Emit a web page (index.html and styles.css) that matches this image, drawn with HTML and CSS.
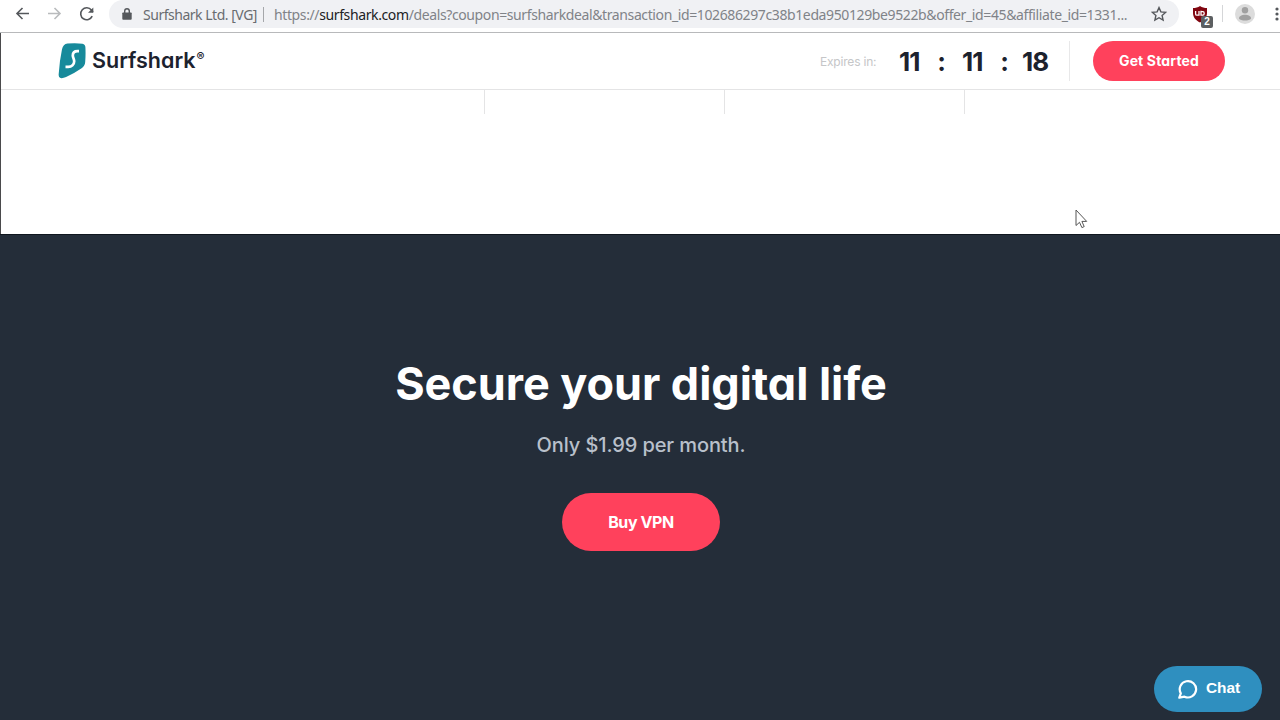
FILE: index.html
```html
<!DOCTYPE html>
<html lang="en">
<head>
    <meta charset="UTF-8">
    <meta name="viewport" content="width=device-width, initial-scale=1.0">
    <title>Surfshark</title>
    <link rel="stylesheet" href="styles.css">
</head>
<body>
    <div class="toolbar">
        <svg class="nav-icon back" width="16" height="16" viewBox="0 0 16 16"><path d="M14 7.500H2.500M7.500 2L2 7.500l5.500 5.500"/></svg>
        <svg class="nav-icon forward" width="16" height="16" viewBox="0 0 16 16"><path d="M1 7.500h11.500M7.500 2L13 7.500 7.500 13"/></svg>
        <svg class="nav-icon reload" width="16" height="16" viewBox="0 0 16 16"><path d="M13.200 10.200A6 6 0 1 1 12.400 4l1.600 2"/><path class="tip" d="M14.300 1.500v5.300H9z"/></svg>
        <div class="address">
            <svg class="lock" width="10" height="12" viewBox="0 0 10 12"><path d="M1 4.500h8q.7 0 .7.7v5.600q0 .9-.9.9H1.200q-.9 0-.9-.9V5.200q0-.7.7-.7z"/><path class="shackle" d="M2.700 5V3a2.300 2.300 0 0 1 4.600 0v2"/></svg>
            <span class="company">Surfshark Ltd. [VG]</span>
            <span class="split"></span>
            <span class="url">https://<b>surfshark.com</b>/deals?coupon=surfsharkdeal&amp;transaction_id=102686297c38b1eda950129be9522b&amp;offer_id=45&amp;affiliate_id=1331...</span>
            <svg class="star" width="16" height="16" viewBox="0 0 16 16"><path d="M8 1.600l1.900 4.300 4.700.5-3.500 3.100 1 4.600L8 11.700l-4.100 2.400 1-4.600L1.400 6.400l4.700-.5z"/></svg>
        </div>
        <div class="extension">
            <svg width="16" height="17" viewBox="0 0 16 17"><path fill="#800610" d="M8 0c2 1.500 4.500 2 7 2v5c0 4.500-3 7.500-7 9.500C4 14.500 1 11.500 1 7V2c2.500 0 5-.5 7-2z"/><path fill="none" stroke="#fff" stroke-width="1.300" d="M3.600 5v3q0 1.200 1.200 1.200H7V5M9 4.800v5M9.200 5.600h1.700q1.300 0 1.300 1.800t-1.300 1.800H9.200"/></svg>
            <span class="count">2</span>
        </div>
        <span class="toolbar-line"></span>
        <svg class="avatar" width="20" height="20" viewBox="0 0 20 20"><circle cx="10" cy="10" r="10" fill="#dcdcdc"/><circle cx="10" cy="6.200" r="3.200" fill="#a0a0a0"/><path fill="#a0a0a0" d="M4 14.500c0-5 12-5 12 0-1.500 2.700-10.500 2.700-12 0z"/></svg>
        <svg class="dots" width="4" height="14" viewBox="0 0 4 14"><circle cx="2" cy="2" r="1.600"/><circle cx="2" cy="7" r="1.600"/><circle cx="2" cy="12" r="1.600"/></svg>
    </div>

    <div class="page">
        <header class="header">
            <a class="logo">
                <svg width="28" height="36" viewBox="0 0 28 36"><path fill="#178a9b" d="M9.500.5Q18-.2 24.500.7q2.800.5 2.900 3.600.4 7-.2 14.700-.3 4-3.600 6.200-7 4.800-15.500 8.900-3.300 1.500-5.600 1Q.3 34.600.7 31 1.500 18 4 6.200 5.100 1 9.500.5z"/><path fill="none" stroke="#fff" stroke-width="2.700" d="M21 8.200h-1.500c-3.500 0-4.700 1.800-4.700 4.300 0 2.300 1.400 3.300 1.400 5.800 0 3.300-2.500 5.500-6 5.500H7.500"/></svg>
                <span class="brand">Surfshark</span><span class="reg">®</span>
            </a>
            <span class="expires">Expires in:</span>
            <div class="timer">
                <span>11</span><i>:</i><span>11</span><i>:</i><span class="seconds">18</span>
            </div>
            <a class="btn btn-small">Get Started</a>
        </header>

        <section class="features">
            <div></div>
            <div></div>
            <div></div>
            <div></div>
        </section>

        <section class="cta">
            <h1>Secure your digital life</h1>
            <p>Only $1.99 per month.</p>
            <a class="btn btn-large">Buy VPN</a>
        </section>
    </div>

    <a class="chat">
        <svg width="20" height="21" viewBox="0 0 20 21"><path d="M2.800 14.300A8.200 8.200 0 1 1 6.500 17.700L1.300 18.700z"/></svg>
        <span>Chat</span>
    </a>

    <svg class="cursor" width="13" height="20" viewBox="0 0 13 20"><path d="M1 1v15.500l3.500-3.200 2.400 5.300 2.300-1-2.300-5.200h4.800z"/></svg>
</body>
</html>
```
FILE: styles.css
```css
* {
    box-sizing: border-box;
}

body {
    margin: 0;
    height: 720px;
    overflow: hidden;
    display: flex;
    flex-direction: column;
    background: #fff;
    font-family: Inter, sans-serif;
    font-feature-settings: "cv11";
}

/* browser toolbar */
.toolbar {
    height: 33px;
    display: flex;
    align-items: flex-start;
    border-bottom: 1px solid #b8b9bb;
    flex-shrink: 0;
}

.nav-icon {
    flex-shrink: 0;
    margin-top: 6px;
    fill: none;
    stroke: #55585c;
    stroke-width: 1.6;
}

.back {
    margin-left: 15px;
}

.forward {
    margin-left: 16px;
    stroke: #b9bbbd;
}

.reload {
    margin-left: 16px;
}

.reload .tip {
    fill: #55585c;
    stroke: none;
}

.address {
    display: flex;
    align-items: center;
    width: 1070px;
    height: 28px;
    margin-left: 14px;
    padding-left: 13px;
    background: #f0f1f4;
    border-radius: 14px;
    font-family: "Noto Sans", sans-serif;
    font-size: 14px;
    color: #808388;
    white-space: nowrap;
}

.lock {
    flex-shrink: 0;
    fill: #55585c;
}

.shackle {
    fill: none;
    stroke: #55585c;
    stroke-width: 1.4;
}

.company {
    width: 114px;
    margin-left: 11px;
    color: #696c70;
    letter-spacing: -0.48px;
}

.split {
    width: 1px;
    height: 15px;
    margin: 0 10px 0 6px;
    background: #a5a7aa;
}

.url {
    width: 877px;
    letter-spacing: -0.385px;
}

.url b {
    font-weight: normal;
    color: #202124;
}

.star {
    flex-shrink: 0;
    fill: none;
    stroke: #55585c;
    stroke-width: 1.4;
}

.extension {
    position: relative;
    width: 16px;
    height: 17px;
    margin: 6px 0 0 13px;
}

.extension svg {
    display: block;
}

.count {
    position: absolute;
    left: 9px;
    top: 10px;
    width: 12px;
    height: 12px;
    border-radius: 2px;
    background: #5c5f61;
    color: #fff;
    font: bold 10px/12px "Liberation Sans", sans-serif;
    text-align: center;
}

.toolbar-line {
    width: 1px;
    height: 17px;
    margin: 5px 0 0 14px;
    background: #d5d6d8;
}

.avatar {
    margin: 4px 0 0 12px;
}

.dots {
    margin: 7px 0 0 20px;
    flex-shrink: 0;
    fill: #55585c;
}

/* page */
.page {
    flex: 1;
    display: flex;
    flex-direction: column;
    border-left: 1px solid #4a4a4c;
}

.header {
    display: flex;
    align-items: center;
    height: 57px;
    padding: 0 54px 0 57px;
    border-bottom: 1px solid #e4e4e5;
    color: #1c222e;
}

.logo {
    display: flex;
    align-items: center;
    width: 762px;
}

.logo svg {
    margin-bottom: 1px;
}

.brand {
    margin: -2px 0 0 6px;
    font-size: 21.5px;
    font-weight: 600;
    letter-spacing: 0;
}

.reg {
    margin: -9px 0 0 1px;
    font-size: 12px;
    font-weight: 600;
}

.expires {
    width: 79px;
    font-size: 12px;
    letter-spacing: -0.2px;
    color: #c5c6c8;
    white-space: nowrap;
}

.timer {
    display: flex;
    align-items: center;
    width: 171px;
    height: 40px;
    border-right: 1px solid #e8e8e9;
    font-size: 26px;
    font-weight: 700;
    letter-spacing: -1px;
}

.timer span {
    width: 21px;
}

.timer i {
    width: 42px;
    font-style: normal;
    text-align: center;
}

.timer .seconds {
    width: 28px;
    margin-left: -3px;
}

.btn {
    display: flex;
    align-items: center;
    justify-content: center;
    background: #ff415c;
    color: #fff;
    font-weight: 700;
    white-space: nowrap;
}

.btn-small {
    width: 132px;
    height: 40px;
    margin: -1px 0 0 23px;
    border-radius: 20px;
    font-size: 14px;
    letter-spacing: 0.15px;
}

.features {
    display: grid;
    grid-template-columns: 483px 240px 240px 1fr;
    height: 144px;
}

.features div {
    height: 24px;
    border-left: 1px solid #e4e4e5;
}

.features div:first-child {
    border-left: none;
}

.cta {
    flex: 1;
    display: flex;
    flex-direction: column;
    align-items: center;
    margin-left: -1px;
    padding: 121px 0 0 2px;
    background: #242d39;
    border-top: 1px solid #10171f;
}

.cta h1 {
    margin: 0;
    font-size: 45px;
    line-height: 56px;
    font-weight: 700;
    letter-spacing: -0.05px;
    color: #fff;
}

.cta p {
    margin: 19px 0 34px;
    font-size: 20px;
    line-height: 28px;
    font-weight: 500;
    letter-spacing: -0.1px;
    color: #b9c0cb;
}

.btn-large {
    width: 158px;
    height: 58px;
    border-radius: 29px;
    font-size: 16px;
    letter-spacing: -0.4px;
}

/* support chat */
.chat {
    position: fixed;
    left: 1154px;
    top: 666px;
    display: flex;
    align-items: center;
    width: 108px;
    height: 46px;
    padding-left: 24px;
    border-radius: 23px;
    background: #2f8fbf;
    color: #fff;
    font: bold 15.4px "Liberation Sans", sans-serif;
}

.chat svg {
    fill: none;
    stroke: #fff;
    stroke-width: 2.2;
    stroke-linejoin: round;
}

.chat span {
    margin: -3px 0 0 8px;
}

.cursor {
    position: fixed;
    left: 1075px;
    top: 209px;
    fill: #fff;
    stroke: #555;
    stroke-width: 1;
}
```
